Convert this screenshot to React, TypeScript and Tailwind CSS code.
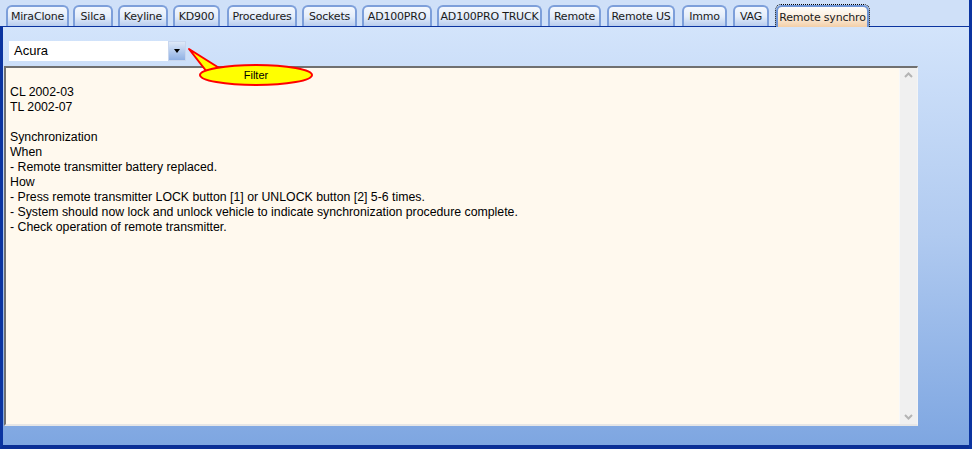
import React from "react";

const tabs = [
  { label: "MiraClone", w: 63, ml: 6 },
  { label: "Silca", w: 40, ml: 4 },
  { label: "Keyline", w: 50, ml: 5 },
  { label: "KD900", w: 47, ml: 5 },
  { label: "Procedures", w: 70, ml: 7 },
  { label: "Sockets", w: 55, ml: 5 },
  { label: "AD100PRO", w: 70, ml: 5 },
  { label: "AD100PRO TRUCK", w: 105, ml: 5 },
  { label: "Remote", w: 53, ml: 6 },
  { label: "Remote US", w: 68, ml: 6 },
  { label: "Immo", w: 45, ml: 7 },
  { label: "VAG", w: 36, ml: 6 },
  { label: "Remote synchro", w: 95, ml: 6, active: true },
];

const lines = [
  "",
  "CL 2002-03",
  "TL 2002-07",
  "",
  "Synchronization",
  "When",
  "- Remote transmitter battery replaced.",
  "How",
  "- Press remote transmitter LOCK button [1] or UNLOCK button [2] 5-6 times.",
  "- System should now lock and unlock vehicle to indicate synchronization procedure complete.",
  "- Check operation of remote transmitter.",
];

function Tab({ label, w, ml, active }: { label: string; w: number; ml: number; active?: boolean }) {
  if (active) {
    return (
      <div style={{ width: w, marginLeft: ml }} className="relative h-[23px] -mb-px self-end">
        <div className="absolute inset-0 rounded-t-[6px] border border-dotted border-black border-b-0" />
        <div className="absolute left-px right-px top-px bottom-0 rounded-t-[6px] border-2 border-b-0 border-[#6f95d6] bg-gradient-to-b from-[#fffdf8] via-[#fbeede] to-[#f3cfa8] flex items-center justify-center pt-[2px]">
          <span className="text-[11px] text-[#1a1a1a] tracking-[-0.2px] font-['DejaVu_Sans',sans-serif] whitespace-nowrap">{label}</span>
        </div>
      </div>
    );
  }
  return (
    <div
      style={{ width: w, marginLeft: ml }}
      className="h-[21px] self-end rounded-t-[6px] border-2 border-b-0 border-[#7d9fda] bg-gradient-to-b from-[#f4f8fe] via-[#e4edfa] to-[#b9cdee] flex items-center justify-center pt-[2px]"
    >
      <span className="text-[11px] text-[#1a1a1a] tracking-[-0.2px] font-['DejaVu_Sans',sans-serif] whitespace-nowrap">{label}</span>
    </div>
  );
}

function Callout() {
  return (
    <svg width="140" height="44" viewBox="0 0 140 44" className="absolute left-[177px] top-[18px]">
      <path d="M9 4 L40 23.5 L27 27 Z" fill="#ffff00" stroke="#ff0000" strokeWidth="2" strokeLinejoin="round" />
      <ellipse cx="76" cy="30" rx="56" ry="10" fill="#ffff00" stroke="#ff0000" strokeWidth="2" />
      <path d="M38.5 24.5 L28.5 27.5 L32 31 L44 28 Z" fill="#ffff00" />
      <text x="76" y="34" textAnchor="middle" fontSize="11" fontFamily="Liberation Sans, Arial, sans-serif" fill="#000">
        Filter
      </text>
    </svg>
  );
}

export default function App() {
  return (
    <div className="w-[972px] h-[449px] relative overflow-hidden flex flex-col bg-[#cfe0f8] font-['Liberation_Sans',Arial,sans-serif]">
      {/* tab strip */}
      <div className="h-[27px] flex items-end border-b border-[#0b34a0] mr-[3px] shrink-0">
        {tabs.map((t) => (
          <Tab key={t.label} {...t} />
        ))}
      </div>

      {/* page */}
      <div className="flex-1 flex flex-col border-l-[3px] border-[#0b34a0] bg-gradient-to-b from-[#d3e4fb] via-[#b0caf0] to-[#7ea6e1] mr-[3px] border-b-[4px] border-b-[#0a2f96] relative">
        <div className="pl-[6px] pt-[14px] h-[39px] shrink-0">
          <div className="w-[177px] h-[20px] bg-white flex items-center">
            <span className="flex-1 pl-[5px] text-[13px] text-black">Acura</span>
            <div className="w-[18px] h-[20px] border border-[#c8d6ee] bg-gradient-to-b from-[#dfe9f8] to-[#8fb0e3] flex items-center justify-center">
              <div className="w-0 h-0 border-l-[3px] border-r-[3px] border-t-[4px] border-l-transparent border-r-transparent border-t-black" />
            </div>
          </div>
        </div>

        <div className="ml-[1px] w-[914px] h-[360px] flex border-t-2 border-l-2 border-t-[#707070] border-l-[#707070] border-r border-b-2 border-r-[#f4f4f4] border-b-[#e6e6e6] bg-[#fff9ee]">
          <div className="flex-1 pl-[4px] pt-[2px] text-[12.3px] leading-[15px] text-black">
            {lines.map((l, i) => (
              <div key={i} className="h-[15px] whitespace-pre">
                {l}
              </div>
            ))}
          </div>
          <div className="w-[18px] bg-[#f0f0f0] border-l border-[#f8f8f8] flex flex-col justify-between items-center py-[4px]">
            <svg width="9" height="6" viewBox="0 0 9 6">
              <path d="M1 5 L4.5 1.5 L8 5" stroke="#b4b4b4" strokeWidth="2" fill="none" />
            </svg>
            <svg width="9" height="6" viewBox="0 0 9 6">
              <path d="M1 1 L4.5 4.5 L8 1" stroke="#b4b4b4" strokeWidth="2" fill="none" />
            </svg>
          </div>
        </div>

        <Callout />
      </div>

      <div className="absolute right-0 top-0 w-[3px] h-full bg-[#0b34a0]" />
    </div>
  );
}
